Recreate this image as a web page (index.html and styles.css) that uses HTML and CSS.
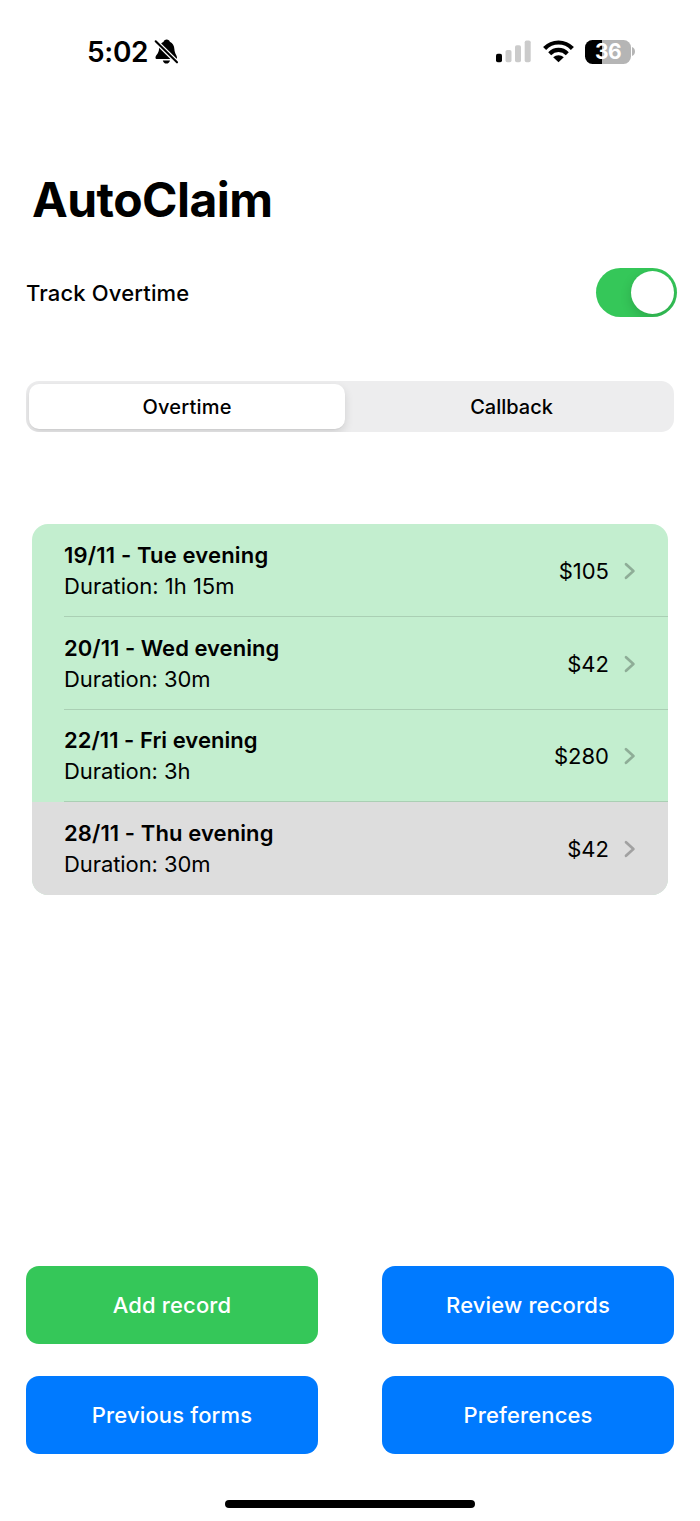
FILE: index.html
```html
<!DOCTYPE html>
<html lang="en">
<head>
<meta charset="utf-8">
<title>AutoClaim</title>
<link rel="stylesheet" href="styles.css">
</head>
<body>
<div class="screen">
  <header class="status">
    <div class="clock"><span class="time">5:02</span>
      <svg class="bell" width="25" height="25" viewBox="0 0 25 25"><path d="M12.700 0.500C14.400 .5 15.500 1.500 15.800 2.700C18.900 4 20.200 6.700 20.400 10.200C20.600 14.500 23 16.200 23 18.500C23 19.500 22.500 20 21.500 20H3C2 20 1.500 19.500 1.500 18.500C1.500 16.200 4.800 14.500 5 10.200C5.200 6.700 6.500 4 9.600 2.700C9.900 1.500 11 .5 12.700 .5Z"/><path d="M8.800 21.400H16C15.500 23.400 14.200 24.500 12.400 24.500S9.300 23.400 8.800 21.400Z"/><path class="bell-gap" d="M1 1.600L24 24.300"/><path class="bell-slash" d="M1.700 2.300L23 23.300"/></svg>
    </div>
    <div class="indicators">
      <svg width="35" height="24" viewBox="0 0 35 24"><rect x="0" y="13.800" width="6" height="8.500" rx="1.800"/><g fill="#cbcbcb"><rect x="9.500" y="10" width="6" height="12.300" rx="1.800"/><rect x="19" y="5.300" width="6" height="17" rx="1.800"/><rect x="28.700" y="0.500" width="6" height="21.800" rx="1.800"/></g></svg>
      <svg class="wifi" width="31" height="24" viewBox="0 0 31 24"><g fill="none" stroke="#000" stroke-width="4.200"><path d="M1.600 8.500C9.300 .5 21.700 .5 29.400 8.500"/><path d="M6.700 13.700C11.700 8.700 19.300 8.700 24.300 13.700"/></g><path d="M15.500 22.300L10.200 17.300C13.100 14.600 17.900 14.600 20.800 17.300Z"/></svg>
      <div class="battery"><span>36</span></div><svg class="tip" width="3" height="9" viewBox="0 0 3 9"><path fill="#b5b5b5" d="M0 0C4 1.500 4 7.500 0 9Z"/></svg>
    </div>
  </header>
  <h1 class="title"><span>AutoClaim</span></h1>
  <div class="track"><span class="track-label">Track Overtime</span><div class="switch"><div class="knob"></div></div></div>
  <div class="segments"><div class="segment selected"><span>Overtime</span></div><div class="segment unselected"><span>Callback</span></div></div>
  <main class="records">
    <div class="record"><div class="row"><div class="info"><b class="wide">19/11 - Tue evening</b><span>Duration: 1h 15m</span></div><span class="amount">$105</span><svg class="chevron" width="12" height="18" viewBox="0 0 12 18"><path d="M2 2.200L9.400 9L2 15.800"/></svg></div></div>
    <div class="record"><div class="row"><div class="info"><b>20/11 - Wed evening</b><span class="tight">Duration: 30m</span></div><span class="amount">$42</span><svg class="chevron" width="12" height="18" viewBox="0 0 12 18"><path d="M2 2.200L9.400 9L2 15.800"/></svg></div></div>
    <div class="record"><div class="row"><div class="info"><b>22/11 - Fri evening</b><span class="tight">Duration: 3h</span></div><span class="amount">$280</span><svg class="chevron" width="12" height="18" viewBox="0 0 12 18"><path d="M2 2.200L9.400 9L2 15.800"/></svg></div></div>
    <div class="record pending"><div class="row"><div class="info"><b class="roomy">28/11 - Thu evening</b><span class="tight">Duration: 30m</span></div><span class="amount">$42</span><svg class="chevron" width="12" height="18" viewBox="0 0 12 18"><path d="M2 2.200L9.400 9L2 15.800"/></svg></div></div>
  </main>
  <nav class="actions">
    <div class="button add"><span>Add record</span></div>
    <div class="button"><span>Review records</span></div>
    <div class="button"><span>Previous forms</span></div>
    <div class="button"><span>Preferences</span></div>
  </nav>
  <div class="home"></div>
</div>
</body>
</html>
```
FILE: styles.css
```css
* { box-sizing: border-box; }
body { margin: 0; background: #fff; color: #000; font-family: Inter, "Liberation Sans", sans-serif; }
svg { display: block; flex: none; }
span, b { white-space: nowrap; }
.screen { width: 700px; height: 1521px; display: flex; flex-direction: column; }
.status { height: 103px; padding: 0 65px 0 87px; display: flex; align-items: center; justify-content: space-between; }
.clock { display: flex; align-items: center; gap: 6px; }
.time { font-size: 28px; font-weight: 600; line-height: 34px; letter-spacing: -0.3px; padding-top: 1px; }
.bell-gap { fill: none; stroke: #fff; stroke-width: 4.6; }
.bell-slash { fill: none; stroke: #000; stroke-width: 2.1; stroke-linecap: round; }
.indicators { display: flex; align-items: center; }
.wifi { margin-left: 12px; }
.battery { width: 46px; height: 24px; margin-left: 11px; border-radius: 7.5px; background: linear-gradient(90deg, #000 36%, #b5b5b5 36%); color: #fff; display: flex; align-items: center; justify-content: center; font-size: 21px; font-weight: 700; line-height: 24px; letter-spacing: -0.5px; }
.tip { margin-left: 1px; }
.title { margin: 67px 0 0; padding-left: 32px; height: 62px; font-size: 48px; font-weight: 700; line-height: 60px; letter-spacing: -0.55px; }
.track { height: 49px; margin-top: 36px; padding: 0 23px 0 26px; display: flex; align-items: center; justify-content: space-between; }
.track-label { font-size: 22px; font-weight: 500; letter-spacing: 0.15px; }
.switch { width: 81px; height: 49px; padding: 3px; border-radius: 25px; background: #35c759; display: flex; justify-content: flex-end; overflow: hidden; }
.knob { width: 43px; height: 43px; border-radius: 50%; background: #fff; box-shadow: 0 4px 12px rgba(0,0,0,.16); }
.segments { height: 51px; margin: 64px 26px 0; padding: 3px; border-radius: 13px; background: #ededee; display: flex; font-size: 20px; font-weight: 500; overflow: hidden; }
.segment { flex: 1; display: flex; align-items: center; justify-content: center; }
.unselected { padding-left: 7px; }
.selected { flex: 0 0 316px; border-radius: 10px; background: #fff; box-shadow: 0 4px 10px rgba(0,0,0,.12), 0 1px 1px rgba(0,0,0,.04); letter-spacing: 0.2px; }
.records { margin: 92px 32px 0; height: 371px; border-radius: 16px; overflow: hidden; background: #c3eecf; display: grid; grid-template-rows: 93px 93px 92px 93px; }
.record { padding-left: 32px; }
.row { height: 100%; padding: 1px 32px 0 0; border-bottom: 1px solid #aacfb4; display: flex; align-items: center; }
.pending { background: #ddd; }
.pending .row { padding-top: 0; border: 0; }
.info { flex: 1; display: flex; flex-direction: column; font-size: 22px; line-height: 31px; }
.info b { font-weight: 600; letter-spacing: 0.03px; }
.info .wide { letter-spacing: 0.17px; }
.info .roomy { letter-spacing: 0.1px; }
.info .tight { letter-spacing: -0.08px; }
.amount { font-size: 22px; }
.chevron { margin-left: 15px; fill: none; stroke: #000; stroke-opacity: .27; stroke-width: 2.7; stroke-linecap: round; stroke-linejoin: round; }
.actions { margin: 371px 26px 0; display: grid; grid-template-columns: 292px 292px; grid-template-rows: 78px 78px; gap: 32px 64px; }
.button { border-radius: 13px; background: #007aff; color: #fff; font-size: 22px; font-weight: 500; letter-spacing: 0.14px; display: flex; align-items: center; justify-content: center; }
.add { background: #35c759; }
.home { width: 250px; height: 8px; margin: 46px auto 0; border-radius: 4px; background: #000; }
```
